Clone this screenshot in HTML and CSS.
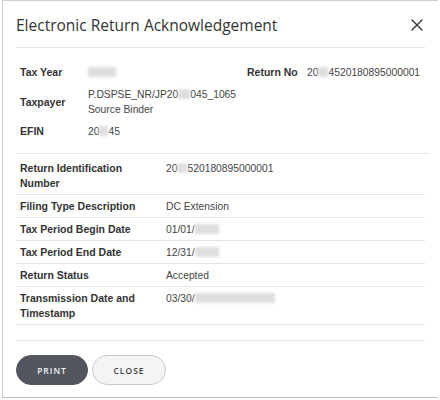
FILE: index.html
```html
<!DOCTYPE html>
<html>
<head>
<meta charset="utf-8">
<link rel="stylesheet" href="styles.css">
</head>
<body>
<div class="modal">
  <div class="header">
    <h1 class="title">Electronic Return Acknowledgement</h1>
    <svg class="close-x" width="12" height="12" viewBox="0 0 12 12"><path d="M1 1 L11 11 M11 1 L1 11" stroke="#333" stroke-width="1.4" fill="none" stroke-linecap="round"/></svg>
  </div>
  <div class="summary">
    <div class="lbl">Tax Year</div>
    <div class="val"><span class="blur w28"></span></div>
    <div class="lbl">Return No</div>
    <div class="val">20<span class="blur w10"></span>4520180895000001</div>

    <div class="lbl mid">Taxpayer</div>
    <div class="val span3">P.DSPSE_NR/JP20<span class="blur w12"></span>045_1065<br>Source Binder</div>

    <div class="lbl">EFIN</div>
    <div class="val span3">20<span class="blur w9"></span>45</div>
  </div>
  <div class="table">
    <div class="row first">
      <div class="lbl">Return Identification<br>Number</div>
      <div class="val">20<span class="blur w10"></span>520180895000001</div>
    </div>
    <div class="row">
      <div class="lbl">Filing Type Description</div>
      <div class="val">DC Extension</div>
    </div>
    <div class="row">
      <div class="lbl">Tax Period Begin Date</div>
      <div class="val">01/01/<span class="blur w24"></span></div>
    </div>
    <div class="row">
      <div class="lbl">Tax Period End Date</div>
      <div class="val">12/31/<span class="blur w24"></span></div>
    </div>
    <div class="row">
      <div class="lbl">Return Status</div>
      <div class="val">Accepted</div>
    </div>
    <div class="row">
      <div class="lbl">Transmission Date and<br>Timestamp</div>
      <div class="val">03/30/<span class="blur w80"></span></div>
    </div>
  </div>
  <div class="footer">
    <button class="btn primary">PRINT</button>
    <button class="btn secondary">CLOSE</button>
  </div>
</div>
</body>
</html>
```
FILE: styles.css
```css
html, body {
  margin: 0;
  padding: 0;
  background: #fff;
  overflow: hidden;
}
.modal {
  margin-left: 2px;
  width: 436px;
  border-top: 1px solid #cfcfcf;
  border-left: 1px solid #cfcfcf;
  border-bottom: 1px solid #bdbdbd;
  padding: 0 13px 0 13px;
  box-sizing: border-box;
  height: 398px;
  display: flex;
  flex-direction: column;
  font-family: "Liberation Sans", Arial, sans-serif;
  color: #333;
}
.modal > * {
  width: 409px;
}
.header {
  height: 47px;
  box-sizing: border-box;
  border-bottom: 1px solid #e4e4e4;
  display: flex;
  align-items: center;
  justify-content: space-between;
}
.title {
  margin: 0;
  font-family: "Open Sans", sans-serif;
  font-weight: 400;
  font-size: 15.5px;
  color: #333;
  padding-top: 2px;
}
.close-x {
  margin-right: 2px;
  margin-top: 2px;
}
.summary {
  display: grid;
  grid-template-columns: 68px 159px 60px 1fr;
  row-gap: 7px;
  padding: 17px 0 14px 4px;
  border-bottom: 1px solid #e4e4e4;
}
.lbl {
  font-weight: 700;
  font-size: 10.5px;
  line-height: 15px;
  color: #333;
}
.val {
  font-size: 10.3px;
  line-height: 15px;
  color: #444;
}
.mid {
  align-self: center;
}
.span3 {
  grid-column: 2 / 5;
}
.blur {
  display: inline-block;
  height: 10px;
  background: #dedede;
  filter: blur(1.5px);
  vertical-align: -1px;
}
.w9 { width: 9px; }
.w10 { width: 10px; }
.w12 { width: 12px; }
.w24 { width: 24px; }
.w28 { width: 28px; }
.w80 { width: 80px; }
.table {
  display: flex;
  flex-direction: column;
}
.row {
  display: grid;
  grid-template-columns: 146px 1fr;
  padding: 4px 0 3px 4px;
  border-bottom: 1px solid #e4e4e4;
}
.row.first {
  padding-top: 7px;
}
.footer {
  margin-top: 15px;
  border-top: 1px solid #e4e4e4;
  padding-top: 14px;
  display: flex;
  gap: 4px;
}
.btn {
  height: 30px;
  border-radius: 15px;
  font-family: "Open Sans", sans-serif;
  font-weight: 600;
  font-size: 8.5px;
  letter-spacing: 1px;
  padding: 0;
  cursor: pointer;
}
.primary {
  width: 72px;
  background: #54565f;
  color: #eceff3;
  border: 1px solid #54565f;
}
.secondary {
  width: 74px;
  background: #f3f4f6;
  color: #444;
  border: 1px solid #c9c9c9;
}
```
